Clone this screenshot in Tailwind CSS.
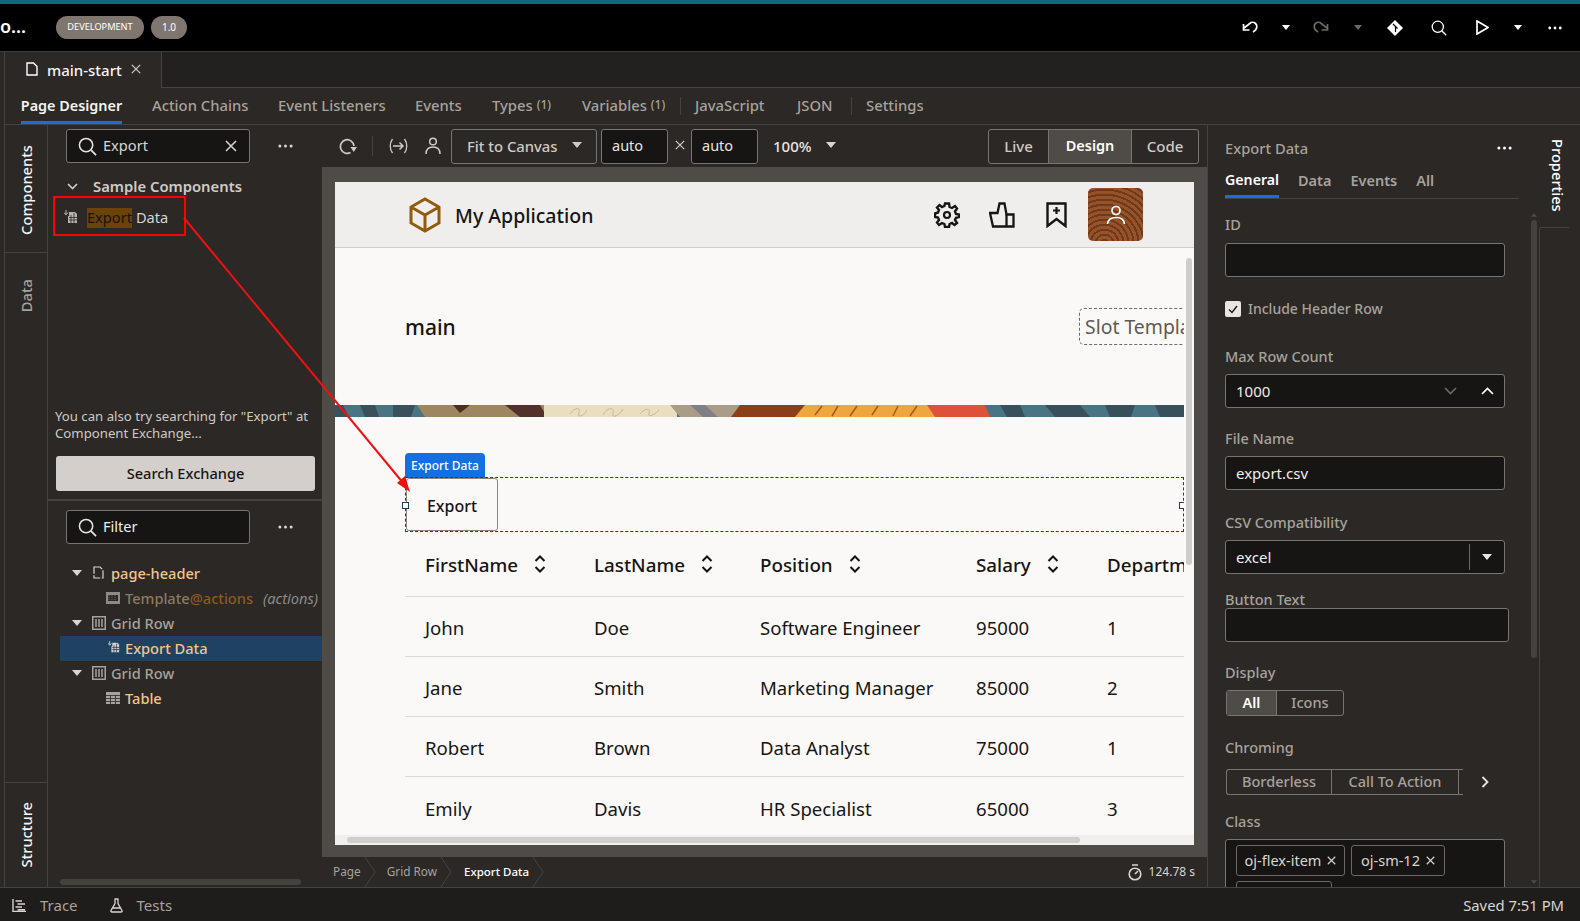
<!DOCTYPE html>
<html lang="en">
<head>
<meta charset="UTF-8" />
<title>Page Designer</title>
<script src="https://cdn.jsdelivr.net/npm/@tailwindcss/browser@4"></script>
</head>
<body class="w-[1580px] h-[921px] overflow-hidden relative flex flex-col bg-[#2b2826] text-[#a8a29c] font-['Noto_Sans',sans-serif] text-[15px] whitespace-nowrap">

<svg class="absolute w-0 h-0">
  <symbol id="caret" viewBox="0 0 10 6"><polygon points="0,0 10,0 5,6" fill="currentColor"/></symbol>
  <symbol id="dots" viewBox="0 0 16 4"><circle cx="2" cy="2" r="1.6" fill="currentColor"/><circle cx="8" cy="2" r="1.6" fill="currentColor"/><circle cx="14" cy="2" r="1.6" fill="currentColor"/></symbol>
  <symbol id="search" viewBox="0 0 20 20"><circle cx="8.5" cy="8.5" r="7" fill="none" stroke="currentColor" stroke-width="1.6"/><path d="M13.5 13.5L19 19" stroke="currentColor" stroke-width="1.8"/></symbol>
  <symbol id="close" viewBox="0 0 12 12"><path d="M1 1L11 11M11 1L1 11" stroke="currentColor" stroke-width="1.5"/></symbol>
  <symbol id="sort" viewBox="0 0 14 20"><path d="M2.5 7L7 2.5L11.5 7M2.5 13L7 17.5L11.5 13" fill="none" stroke="currentColor" stroke-width="2"/></symbol>
  <symbol id="grid" viewBox="0 0 14 14"><rect x="0.75" y="0.75" width="12.5" height="12.5" fill="none" stroke="currentColor" stroke-width="1.5"/><path d="M4 3v8M7 3v8M10 3v8" stroke="currentColor" stroke-width="1.5"/></symbol>
  <symbol id="export" viewBox="0 0 14 14"><path d="M5 2h6l2 2v9H4V6h1z" fill="currentColor"/><path d="M5 7.5h8M5 10h8M7 5v8M10 3v10" stroke="#2b2826" stroke-width="0.8"/><path d="M2 0v4M0 2.5L2 5L4 2.5" fill="none" stroke="currentColor" stroke-width="1"/></symbol>
</svg>

<div class="h-[4px] bg-[#0f6a7e] shrink-0"></div>

<!-- top bar -->
<header class="h-[48px] shrink-0 bg-black border-b border-[#3f3c38] flex items-center text-white">
  <span class="w-[51px] text-[18px] font-semibold pb-[2px]">o...</span>
  <span class="ml-[5px] h-[23px] w-[88px] rounded-full bg-[#7f776f] text-[9.2px] flex items-center justify-center mb-[1px]">DEVELOPMENT</span>
  <span class="ml-[7px] h-[23px] w-[36px] rounded-full bg-[#7f776f] text-[10px] flex items-center justify-center mb-[1px]">1.0</span>
  <div class="ml-auto flex items-center h-full">
    <svg class="w-[16px] h-[14px] mr-[24px]" viewBox="0 0 16 14"><path d="M2 7L9 1.5C12.5 0.5 15 3 14.8 6C14.6 8.5 13 10 11 11M1.5 3V9H7.5" fill="none" stroke="white" stroke-width="1.7"/></svg>
    <svg class="w-[8px] h-[5px] mr-[23px] text-white"><use href="#caret"/></svg>
    <svg class="w-[16px] h-[14px] mr-[25px]" viewBox="0 0 16 14"><path d="M14 7L7 1.5C3.5 0.5 1 3 1.2 6C1.4 8.5 3 10 5 11M14.5 3V9H8.5" fill="none" stroke="#6c6863" stroke-width="1.7"/></svg>
    <svg class="w-[8px] h-[5px] mr-[25px] text-[#6c6863]"><use href="#caret"/></svg>
    <svg class="w-[16px] h-[16px] mr-[28px]" viewBox="0 0 16 16"><path d="M8 0L16 8L8 16L0 8Z" fill="white"/><path d="M6 4L10.5 8.5M8.5 6.5V12" stroke="black" stroke-width="1.2"/></svg>
    <svg class="w-[16px] h-[16px] mr-[29px] text-white"><use href="#search"/></svg>
    <svg class="w-[13px] h-[15px] mr-[25px]" viewBox="0 0 13 15"><polygon points="1,1 12,7.5 1,14" fill="none" stroke="white" stroke-width="1.7"/></svg>
    <svg class="w-[8px] h-[5px] mr-[26px] text-white"><use href="#caret"/></svg>
    <svg class="w-[14px] h-[4px] mr-[18px] text-white"><use href="#dots"/></svg>
  </div>
</header>

<div class="flex-1 flex min-h-0">
  <div class="w-[4px] shrink-0 border-r border-[#46423e] box-content"></div>
  <div class="flex-1 flex flex-col min-w-0">

    <!-- file tabs -->
    <div class="h-[36px] shrink-0 bg-[#232120] border-b border-[#46423e] flex">
      <div class="w-[157px] -mb-[1px] bg-[#2b2826] border-r border-[#46423e] flex items-center pl-[21px] text-[#f5f4f2]">
        <svg class="w-[12px] h-[14px] mb-[3px]" viewBox="0 0 12 14"><path d="M1 1H7.5L11 4.5V13H1Z" fill="none" stroke="white" stroke-width="1.4"/></svg>
        <span class="ml-[9px] font-medium">main-start</span>
        <svg class="w-[10px] h-[10px] ml-[9px] mb-[2px] text-[#cfcac5]"><use href="#close"/></svg>
      </div>
    </div>

    <!-- designer tabs -->
    <nav class="h-[37px] shrink-0 border-b border-[#46423e] flex items-stretch font-medium text-[14.8px]">
      <span class="ml-[16px] w-[101px] flex items-center justify-center text-[#f5f4f2] font-semibold text-[14.4px] border-b-[3px] border-[#1a6fd6] pt-[2px]">Page Designer</span>
      <span class="ml-[30px] w-[96px] flex items-center pb-[2px]">Action Chains</span>
      <span class="ml-[30px] w-[107px] flex items-center pb-[2px]">Event Listeners</span>
      <span class="ml-[30px] w-[47px] flex items-center pb-[2px]">Events</span>
      <span class="ml-[30px] w-[60px] flex items-center pb-[2px]">Types<span class="ml-[4px] text-[12px]">(1)</span></span>
      <span class="ml-[30px] w-[83px] flex items-center pb-[2px]">Variables<span class="ml-[4px] text-[12px]">(1)</span></span>
      <span class="ml-[15px] w-[1px] h-[18px] self-center bg-[#46423e]"></span>
      <span class="ml-[14px] w-[72px] flex items-center pb-[2px]">JavaScript</span>
      <span class="ml-[30px] w-[39px] flex items-center pb-[2px]">JSON</span>
      <span class="ml-[15px] w-[1px] h-[18px] self-center bg-[#46423e]"></span>
      <span class="ml-[14px] w-[60px] flex items-center pb-[2px]">Settings</span>
    </nav>

    <div class="flex-1 flex min-h-0">
      <!-- left rail -->
      <aside class="w-[43px] shrink-0 border-r border-[#46423e] flex flex-col font-medium text-[14.7px]">
        <div class="h-[128px] border-b border-[#46423e] flex items-center justify-center text-[#f5f4f2] pt-[2px]"><span class="[writing-mode:vertical-rl] rotate-180">Components</span></div>
        <div class="flex-1 flex justify-center pt-[26px]"><span class="[writing-mode:vertical-rl] rotate-180 self-start">Data</span></div>
        <div class="h-[105px] border-t border-[#46423e] flex items-center justify-center text-[#f5f4f2]"><span class="[writing-mode:vertical-rl] rotate-180">Structure</span></div>
      </aside>

      <!-- left panel -->
      <section class="w-[274px] shrink-0 flex flex-col text-[14.6px]">
        <div class="h-[376px] shrink-0 flex flex-col border-b-2 border-[#46423e]">
          <div class="mt-[4px] ml-[18px] flex items-center">
            <div class="w-[184px] h-[34px] rounded-[3px] border border-[#7a746e] bg-[#161513] flex items-center pl-[11px] pr-[12px] text-[#d9d5d1]">
              <svg class="w-[19px] h-[19px] text-[#e8e5e2]"><use href="#search"/></svg>
              <span class="ml-[6px]">Export</span>
              <svg class="w-[12px] h-[12px] ml-auto"><use href="#close"/></svg>
            </div>
            <svg class="w-[15px] h-[4px] ml-[28px] text-[#d9d5d1]"><use href="#dots"/></svg>
          </div>
          <div class="mt-[13px] ml-[19px] h-[20px] flex items-center text-[#d0cbc6]">
            <svg class="w-[11px] h-[7px]" viewBox="0 0 11 7"><path d="M1 1L5.5 5.5L10 1" fill="none" stroke="currentColor" stroke-width="1.7"/></svg>
            <span class="ml-[15px] font-semibold text-[14.8px]">Sample Components</span>
          </div>
          <div class="mt-[11px] ml-[16px] h-[22px] flex items-center text-[#d9d5d1]">
            <svg class="w-[14px] h-[14px] mb-[3px] text-[#b8b3ae]"><use href="#export"/></svg>
            <span class="ml-[9px] bg-[#6b4207] text-[#1a1310] h-[20px] flex items-center">Export</span><span class="ml-[4px]">Data</span>
          </div>
          <p class="mt-[179px] ml-[7px] text-[13.2px] leading-[17px] text-[#cfcac5]">You can also try searching for "Export" at<br>Component Exchange...</p>
          <div class="mt-[14px] ml-[8px] w-[259px] h-[35px] rounded-[3px] bg-[#d4cfcb] text-[#161513] font-medium flex items-center justify-center">Search Exchange</div>
        </div>
        <div class="mt-[9px] ml-[18px] flex items-center">
          <div class="w-[184px] h-[34px] rounded-[3px] border border-[#7a746e] bg-[#161513] flex items-center pl-[11px] text-[#f0eeec]">
            <svg class="w-[19px] h-[19px] text-[#e8e5e2]"><use href="#search"/></svg>
            <span class="ml-[6px]">Filter</span>
          </div>
          <svg class="w-[15px] h-[4px] ml-[28px] text-[#d9d5d1]"><use href="#dots"/></svg>
        </div>
        <div class="mt-[17px] ml-[12px] flex flex-col font-medium">
          <div class="h-[25px] flex items-center pl-[12px] text-[#f2c48d]">
            <svg class="w-[10px] h-[6px] text-[#d9d5d1] mb-[2px]"><use href="#caret"/></svg>
            <svg class="w-[11px] h-[13px] ml-[11px] mb-[2px]" viewBox="0 0 11 13"><path d="M1 1H7L10 4V12H1Z" fill="none" stroke="#d9d5d1" stroke-width="1.2" stroke-dasharray="9 1.5"/></svg>
            <span class="ml-[7px]">page-header</span>
          </div>
          <div class="h-[25px] flex items-center pl-[46px] text-[#8d7a62]">
            <svg class="w-[14px] h-[12px] mb-[2px]" viewBox="0 0 14 12"><rect width="14" height="12" fill="#8f8a85"/><rect x="2" y="3" width="10" height="6" fill="#2b2826"/><path d="M3 3v6M6 3v6M9 3v6" stroke="#8f8a85" stroke-width="0.7" stroke-dasharray="1 1"/></svg>
            <span class="ml-[5px]">Template</span><span class="text-[#8f5b1c]">@actions</span><span class="ml-[10px] italic font-normal text-[#8f8a85]">(actions)</span>
          </div>
          <div class="h-[25px] flex items-center pl-[12px]">
            <svg class="w-[10px] h-[6px] text-[#d9d5d1] mb-[2px]"><use href="#caret"/></svg>
            <svg class="w-[14px] h-[14px] ml-[10px] mb-[1px] text-[#a8a29c]"><use href="#grid"/></svg>
            <span class="ml-[5px]">Grid Row</span>
          </div>
          <div class="h-[25px] flex items-center pl-[48px] text-[#f2c48d] bg-[#1f4263]">
            <svg class="w-[12px] h-[12px] mb-[3px] text-[#c9d2da]"><use href="#export"/></svg>
            <span class="ml-[5px]">Export Data</span>
          </div>
          <div class="h-[25px] flex items-center pl-[12px]">
            <svg class="w-[10px] h-[6px] text-[#d9d5d1] mb-[2px]"><use href="#caret"/></svg>
            <svg class="w-[14px] h-[14px] ml-[10px] mb-[1px] text-[#a8a29c]"><use href="#grid"/></svg>
            <span class="ml-[5px]">Grid Row</span>
          </div>
          <div class="h-[25px] flex items-center pl-[46px] text-[#f2c48d]">
            <svg class="w-[14px] h-[12px] mb-[2px]" viewBox="0 0 14 12"><rect width="14" height="12" fill="#a8a29c"/><path d="M0 3.5h14M0 6.5h14M0 9.5h14M4.5 3v9M9.5 3v9" stroke="#2b2826" stroke-width="0.8"/></svg>
            <span class="ml-[5px]">Table</span>
          </div>
        </div>
        <div class="mt-auto mb-[2px] ml-[12px] w-[241px] h-[6px] rounded-full bg-[#45423e]"></div>
      </section>

      <!-- centre -->
      <main class="w-[885px] shrink-0 flex flex-col min-h-0 bg-[#4f4b46]">
        <div class="h-[42px] shrink-0 bg-[#2b2826] flex items-center text-[#cfcac5]">
          <svg class="w-[18px] h-[17px] ml-[17px]" viewBox="0 0 18 17"><path d="M15 8A6.8 6.8 0 1 0 11.5 14.5" fill="none" stroke="currentColor" stroke-width="1.7"/><polygon points="11.5,9 18,9 14.7,14" fill="currentColor"/></svg>
          <span class="ml-[15px] w-[1px] h-[20px] bg-[#46423e]"></span>
          <svg class="w-[19px] h-[16px] ml-[16px]" viewBox="0 0 19 16"><path d="M3.5 1C0.5 5 0.5 11 3.5 15M15.5 1C18.5 5 18.5 11 15.5 15" fill="none" stroke="currentColor" stroke-width="1.3"/><path d="M4 8H14M10.5 4.5L14 8L10.5 11.5" fill="none" stroke="currentColor" stroke-width="1.5"/></svg>
          <svg class="w-[16px] h-[18px] ml-[17px]" viewBox="0 0 16 18"><circle cx="8" cy="4.5" r="3.3" fill="none" stroke="currentColor" stroke-width="1.5"/><path d="M1 17C1 12 4 10 8 10S15 12 15 17" fill="none" stroke="currentColor" stroke-width="1.5"/></svg>
          <div class="ml-[10px] w-[146px] h-[35px] rounded-[3px] border border-[#7a746e] flex items-center pl-[15px] font-medium text-[14.8px]">Fit to Canvas<svg class="w-[10px] h-[6px] ml-[15px] mb-[2px]"><use href="#caret"/></svg></div>
          <div class="ml-[4px] w-[67px] h-[35px] rounded-[3px] border border-[#7a746e] bg-[#161513] flex items-center pl-[10px] text-[#e8e5e2] text-[14.5px]">auto</div>
          <svg class="w-[10px] h-[10px] ml-[7px] mr-[6px] mb-[2px] text-[#cfcac5]"><use href="#close"/></svg>
          <div class="w-[67px] h-[35px] rounded-[3px] border border-[#7a746e] bg-[#161513] flex items-center pl-[10px] text-[#e8e5e2] text-[14.5px]">auto</div>
          <span class="ml-[15px] font-medium text-[#e8e5e2]">100%</span>
          <svg class="w-[10px] h-[6px] ml-[14px] mb-[2px] text-[#d9d5d1]"><use href="#caret"/></svg>
          <div class="ml-auto mr-[8px] h-[35px] flex rounded-[3px] border border-[#7a746e] font-medium">
            <span class="w-[59px] flex items-center justify-center">Live</span>
            <span class="w-[84px] flex items-center justify-center bg-[#4f4b46] text-white font-semibold text-[14.5px] border-x border-[#7a746e]">Design</span>
            <span class="w-[66px] flex items-center justify-center">Code</span>
          </div>
        </div>

        <div class="flex-1 min-h-0 px-[13px] pt-[15px] pb-[12px] flex">
          <div class="flex-1 min-w-0 flex flex-col bg-[#faf9f8] text-[#161513]">
            <div class="h-[66px] shrink-0 bg-[#efeeec] border-b border-[#d0cecb] flex items-center">
              <svg class="w-[32px] h-[36px] ml-[74px]" viewBox="0 0 32 36"><path d="M16 2L30 10V26L16 34L2 26V10ZM2 10L16 18L30 10M16 18V34" fill="none" stroke="#935a0e" stroke-width="3"/></svg>
              <span class="ml-[14px] text-[19.5px] font-medium pt-[3px]">My Application</span>
              <svg class="w-[26px] h-[26px] ml-auto" viewBox="0 0 26 26"><circle cx="13" cy="13" r="3" fill="none" stroke="#161513" stroke-width="2.2"/><path d="M11 1.5H15L15.6 5L18 6L21 4L23 6.5L21 9.5L22 12L25 12.5V15L22 15.8L21 18L23 21L20.5 23L18 21L15.6 22L15 25H11L10.4 22L8 21L5 23L3 20.5L5 18L4 15.6L1 15V11.5L4 10.5L5 8L3 5.5L5.5 3L8 5L10.4 4Z" fill="none" stroke="#161513" stroke-width="2.4"/></svg>
              <svg class="w-[26px] h-[26px] ml-[29px]" viewBox="0 0 26 26"><path d="M1 11H8.5L10.5 1.5H15.5L17.5 12.5H24.5V24.5H4Z" fill="none" stroke="#161513" stroke-width="2.3"/><path d="M17.5 12.5V24.5" stroke="#161513" stroke-width="2.3"/></svg>
              <svg class="w-[21px] h-[26px] ml-[31px]" viewBox="0 0 21 26"><path d="M1.5 1.5H19.5V24L10.5 17L1.5 24Z" fill="none" stroke="#161513" stroke-width="2.4"/><path d="M10.5 5V12M7 8.5H14" stroke="#161513" stroke-width="2.2"/></svg>
              <div class="ml-[21px] mr-[51px] w-[55px] h-[53px] rounded-[5px] flex items-center justify-center bg-[repeating-radial-gradient(circle_at_30%_105%,#96522a_0px,#96522a_3px,#6f3a18_3px,#6f3a18_5px)]">
                <svg class="w-[20px] h-[20px]" viewBox="0 0 20 20"><circle cx="10" cy="5.5" r="4" fill="none" stroke="white" stroke-width="1.7"/><path d="M1.5 19C2 14 5 12.5 10 12.5S18 14 18.5 19" fill="none" stroke="white" stroke-width="1.7"/></svg>
              </div>
            </div>

            <div class="flex-1 min-h-0 flex">
              <div class="w-[849px] shrink-0 overflow-hidden flex flex-col *:shrink-0">
                <div class="h-[157px] flex items-center pl-[70px]">
                  <span class="w-[674px] shrink-0 text-[21px] font-medium pt-[2px]">main</span>
                  <span class="h-[37px] shrink-0 rounded-l-[5px] border border-dashed border-[#6e6a65] pl-[5px] pr-[20px] text-[19.4px] text-[#5f5a55] flex items-center">Slot Template</span>
                </div>
                <svg class="w-[849px] h-[12px]" viewBox="0 0 849 12" preserveAspectRatio="none">
                  <rect width="849" height="12" fill="#4a7484"/>
                  <path d="M25 0H40L44 12H30ZM58 0H80L76 12H58ZM0 0H8L14 12H0Z" fill="#3a505b"/>
                  <polygon points="82,0 210,0 214,12 90,12" fill="#9d8660"/>
                  <polygon points="118,0 135,0 125,8" fill="#4a2e1e"/>
                  <polygon points="170,0 205,0 212,12 185,12" fill="#54302a"/>
                  <rect x="209" y="0" width="133" height="12" fill="#e9dec0"/>
                  <path d="M235 9C240 2 246 2 244 8S250 10 252 5M268 10C272 2 280 2 278 8S284 11 288 4M305 9C310 3 316 3 314 8S320 10 324 5" fill="none" stroke="#c9b88f" stroke-width="1"/>
                  <polygon points="335,0 405,0 400,12 345,12" fill="#a99d87"/>
                  <polygon points="355,0 370,0 383,12 368,12" fill="#7f7f86"/>
                  <polygon points="405,0 470,0 460,12 396,12" fill="#8a3f1a"/>
                  <polygon points="470,0 600,0 606,12 460,12" fill="#efa63e"/>
                  <path d="M480 10L487 1M497 11L503 1M515 11L522 1M537 10L543 1M558 11L563 1M575 11L582 1" stroke="#a25c22" stroke-width="1.5"/>
                  <polygon points="592,0 650,0 655,12 600,12" fill="#dd5239"/>
                  <polygon points="655,0 849,0 849,12 660,12" fill="#4a7484"/>
                  <path d="M665 0H685L690 12H672ZM710 0H745L755 12H720ZM770 0H800L796 12H775ZM820 0H849V12H825Z" fill="#37505c"/>
                </svg>
                <div class="mt-[36px] ml-[70px] w-[80px] h-[25px] rounded-t-[4px] bg-[#1270e0] text-white text-[12px] font-medium flex items-center justify-center pt-[1px]">Export Data</div>
                <div class="relative -mt-[1px] ml-[70px] h-[55px] w-[779px] border border-dashed border-[#1f3f66]">
                  <div class="w-[92px] h-full rounded-[3px] border border-[#8a8580] flex items-center justify-center text-[16px] font-medium pt-[2px]">Export</div>
                  <span class="absolute -left-[4px] top-[24px] w-[7px] h-[7px] bg-white border border-[#1f3f66]"></span>
                  <span class="absolute -right-[3px] top-[24px] w-[7px] h-[7px] bg-white border border-[#1f3f66]"></span>
                </div>
                <div class="ml-[70px] w-[830px] flex flex-col text-[18.6px]">
                  <div class="h-[65px] flex items-center border-b border-[#dcdad7] font-medium text-[18.8px] pt-[2px]">
                    <span class="w-[169px] pl-[20px] flex items-center">FirstName<svg class="w-[14px] h-[20px] ml-[15px] mb-[2px]"><use href="#sort"/></svg></span>
                    <span class="w-[166px] pl-[20px] flex items-center">LastName<svg class="w-[14px] h-[20px] ml-[15px] mb-[2px]"><use href="#sort"/></svg></span>
                    <span class="w-[216px] pl-[20px] flex items-center">Position<svg class="w-[14px] h-[20px] ml-[15px] mb-[2px]"><use href="#sort"/></svg></span>
                    <span class="w-[131px] pl-[20px] flex items-center">Salary<svg class="w-[14px] h-[20px] ml-[15px] mb-[2px]"><use href="#sort"/></svg></span>
                    <span class="pl-[20px]">Department</span>
                  </div>
                  <div class="h-[60px] flex items-center border-b border-[#dcdad7] pt-[3px]">
                    <span class="w-[169px] pl-[20px]">John</span><span class="w-[166px] pl-[20px]">Doe</span><span class="w-[216px] pl-[20px]">Software Engineer</span><span class="w-[131px] pl-[20px]">95000</span><span class="pl-[20px]">1</span>
                  </div>
                  <div class="h-[60px] flex items-center border-b border-[#dcdad7] pt-[3px]">
                    <span class="w-[169px] pl-[20px]">Jane</span><span class="w-[166px] pl-[20px]">Smith</span><span class="w-[216px] pl-[20px]">Marketing Manager</span><span class="w-[131px] pl-[20px]">85000</span><span class="pl-[20px]">2</span>
                  </div>
                  <div class="h-[60px] flex items-center border-b border-[#dcdad7] pt-[3px]">
                    <span class="w-[169px] pl-[20px]">Robert</span><span class="w-[166px] pl-[20px]">Brown</span><span class="w-[216px] pl-[20px]">Data Analyst</span><span class="w-[131px] pl-[20px]">75000</span><span class="pl-[20px]">1</span>
                  </div>
                  <div class="h-[60px] flex items-center pt-[3px]">
                    <span class="w-[169px] pl-[20px]">Emily</span><span class="w-[166px] pl-[20px]">Davis</span><span class="w-[216px] pl-[20px]">HR Specialist</span><span class="w-[131px] pl-[20px]">65000</span><span class="pl-[20px]">3</span>
                  </div>
                </div>
              </div>
              <div class="flex-1 flex justify-center pt-[10px] pb-[270px]"><div class="w-[6px] rounded-full bg-[#d0cecb]"></div></div>
            </div>
            <div class="h-[10px] shrink-0 bg-[#f0efed] flex items-center pl-[12px]"><div class="w-[733px] h-[6px] rounded-full bg-[#d0cecb]"></div></div>
          </div>
        </div>

        <div class="h-[30px] shrink-0 bg-[#2b2826] flex items-center text-[11.8px]">
          <span class="ml-[11px]">Page</span>
          <svg class="w-[12px] h-[30px] ml-[3px]" viewBox="0 0 12 30"><path d="M1 0L11 15L1 30" fill="none" stroke="#46423e"/></svg>
          <span class="ml-[11px]">Grid Row</span>
          <svg class="w-[12px] h-[30px] ml-[3px]" viewBox="0 0 12 30"><path d="M1 0L11 15L1 30" fill="none" stroke="#46423e"/></svg>
          <span class="ml-[12px] text-white font-medium text-[11.5px]">Export Data</span>
          <svg class="w-[12px] h-[30px] ml-[3px]" viewBox="0 0 12 30"><path d="M1 0L11 15L1 30" fill="none" stroke="#46423e"/></svg>
          <svg class="w-[14px] h-[17px] ml-auto" viewBox="0 0 14 17"><circle cx="7" cy="10" r="5.8" fill="none" stroke="#d9d5d1" stroke-width="1.6"/><path d="M4 1H10M7 10L10 7" stroke="#d9d5d1" stroke-width="1.6"/></svg>
          <span class="ml-[7px] mr-[12px] text-[#d9d5d1] text-[12px]">124.78 s</span>
        </div>
      </main>

      <!-- properties -->
      <section class="w-[331px] shrink-0 pl-[17px] flex border-l border-[#46423e] relative text-[14.5px] font-medium">
        <div class="w-[294px] shrink-0 flex flex-col overflow-hidden *:shrink-0">
          <div class="mt-[13px] h-[20px] flex items-center"><span class="text-[14.7px]">Export Data</span><svg class="w-[15px] h-[4px] ml-auto mr-[7px] text-white"><use href="#dots"/></svg></div>
          <div class="mt-[13px] h-[28px] flex border-b border-[#46423e] font-semibold leading-[18px]">
            <span class="w-[54px] text-white text-[14.2px] border-b-[3px] border-[#1a6fd6]">General</span>
            <span class="ml-[19px]">Data</span>
            <span class="ml-[19px]">Events</span>
            <span class="ml-[19px]">All</span>
          </div>
          <div class="mt-[16px] h-[20px] leading-[18px]">ID</div>
          <div class="mt-[8px] w-[280px] h-[34px] rounded-[3px] border border-[#7a746e] bg-[#161513]"></div>
          <div class="mt-[23px] h-[18px] flex items-center">
            <span class="w-[16px] h-[16px] rounded-[2px] bg-[#e8e5e2] flex items-center justify-center"><svg class="w-[10px] h-[9px]" viewBox="0 0 10 9"><path d="M1 4.5L4 7.5L9 1" fill="none" stroke="#161513" stroke-width="1.3"/></svg></span>
            <span class="ml-[7px] text-[14px] pb-[2px]">Include Header Row</span>
          </div>
          <div class="mt-[29px] h-[20px] leading-[18px]">Max Row Count</div>
          <div class="mt-[7px] w-[280px] h-[34px] rounded-[3px] border border-[#7a746e] bg-[#161513] flex items-center pl-[10px] text-[#f0eeec] text-[15px] font-normal">1000
            <svg class="w-[13px] h-[8px] ml-auto" viewBox="0 0 13 8"><path d="M1 1L6.5 6.5L12 1" fill="none" stroke="#6c6863" stroke-width="1.7"/></svg>
            <svg class="w-[13px] h-[8px] ml-[24px] mr-[10px]" viewBox="0 0 13 8"><path d="M1 7L6.5 1.5L12 7" fill="none" stroke="white" stroke-width="1.7"/></svg>
          </div>
          <div class="mt-[21px] h-[20px] leading-[18px]">File Name</div>
          <div class="mt-[7px] w-[280px] h-[34px] rounded-[3px] border border-[#7a746e] bg-[#161513] flex items-center pl-[10px] text-[#f0eeec] text-[15px] font-normal">export.csv</div>
          <div class="mt-[22px] h-[20px] leading-[20px]">CSV Compatibility</div>
          <div class="mt-[8px] w-[280px] h-[34px] rounded-[3px] border border-[#7a746e] bg-[#161513] flex items-center pl-[10px] text-[#f0eeec] text-[15px] font-normal">excel
            <span class="ml-auto w-[1px] h-[26px] bg-[#6c6863]"></span>
            <svg class="w-[10px] h-[6px] mx-[12px] text-[#e8e5e2]"><use href="#caret"/></svg>
          </div>
          <div class="mt-[15px] h-[20px] leading-[20px]">Button Text</div>
          <div class="-mt-[1px] w-[284px] h-[34px] rounded-[3px] border border-[#7a746e] bg-[#161513]"></div>
          <div class="mt-[21px] h-[20px] leading-[18px]">Display</div>
          <div class="mt-[7px] ml-[1px] w-[118px] h-[26px] flex rounded-[3px] border border-[#7a746e]">
            <span class="w-[50px] flex items-center justify-center bg-[#4f4b46] text-white font-semibold border-r border-[#7a746e]">All</span>
            <span class="flex-1 flex items-center justify-center">Icons</span>
          </div>
          <div class="mt-[22px] h-[20px] leading-[18px]">Chroming</div>
          <div class="mt-[11px] flex items-center">
            <div class="ml-[1px] w-[237px] h-[26px] flex rounded-l-[3px] border border-r-0 border-[#7a746e]">
              <span class="w-[105px] flex items-center justify-center border-r border-[#7a746e]">Borderless</span>
              <span class="w-[127px] flex items-center justify-center border-r border-[#7a746e]">Call To Action</span>
            </div>
            <svg class="w-[8px] h-[12px] ml-[18px]" viewBox="0 0 8 12"><path d="M1.5 1L6.5 6L1.5 11" fill="none" stroke="#e8e5e2" stroke-width="1.8"/></svg>
          </div>
          <div class="mt-[17px] h-[20px] leading-[18px]">Class</div>
          <div class="mt-[7px] w-[280px] h-[80px] rounded-t-[3px] border border-[#7a746e] bg-[#161513] pl-[10px] pt-[5px] flex flex-wrap gap-x-[6px] gap-y-[5px] content-start font-normal text-[#d9d5d1]">
            <span class="w-[109px] h-[31px] rounded-[3px] border border-[#6c6863] flex items-center justify-center">oj-flex-item<svg class="w-[9px] h-[9px] ml-[6px]"><use href="#close"/></svg></span>
            <span class="w-[94px] h-[31px] rounded-[3px] border border-[#6c6863] flex items-center justify-center">oj-sm-12<svg class="w-[9px] h-[9px] ml-[6px]"><use href="#close"/></svg></span>
            <span class="w-[96px] h-[31px] rounded-[3px] border border-[#6c6863]"></span>
          </div>
        </div>
        <div class="w-[8px] shrink-0 relative flex flex-col items-center ml-[11px]">
          <svg class="w-[6px] h-[4px] mt-[88px] text-[#4f4b46] rotate-180"><use href="#caret"/></svg>
          <div class="mt-[3px] w-[6px] h-[438px] rounded-full bg-[#45423e]"></div>
          <svg class="w-[6px] h-[4px] mt-auto mb-[3px] text-[#4f4b46]"><use href="#caret"/></svg>
        </div>
        <div class="ml-[1px] flex-1 flex flex-col font-medium text-[14.7px] text-white">
          <div class="h-[102px] flex pt-[14px] pl-[8px]"><span class="[writing-mode:vertical-rl] self-start">Properties</span></div>
          <div class="flex-1 border-l border-t border-[#46423e] rounded-tl-[2px]"></div>
        </div>
      </section>
    </div>
  </div>
</div>

<!-- status bar -->
<footer class="h-[34px] shrink-0 bg-[#1e1d1b] border-t border-[#46423e] flex items-center text-[#a8a29c] pt-[1px]">
  <svg class="w-[14px] h-[13px] ml-[12px]" viewBox="0 0 14 13"><path d="M1 0V12.5H14M3.5 2H10M5.5 5H13M3.5 8H10M5.5 10.8H13" fill="none" stroke="#d9d5d1" stroke-width="1.4"/></svg>
  <span class="ml-[14px]">Trace</span>
  <svg class="w-[13px] h-[15px] ml-[32px]" viewBox="0 0 13 15"><path d="M4.5 1H8.5M5 1V5.5L1 12.5C0.6 13.5 1 14 2 14H11C12 14 12.4 13.5 12 12.5L8 5.5V1M3 10H10" fill="none" stroke="#d9d5d1" stroke-width="1.3"/></svg>
  <span class="ml-[14px]">Tests</span>
  <span class="ml-auto mr-[16px] text-[#d9d5d1] text-[14.8px]">Saved 7:51 PM</span>
</footer>

<!-- annotation drawn over the page -->
<div class="absolute left-[53px] top-[196px] w-[133px] h-[40px] border-2 border-[#ff0000]"></div>
<svg class="absolute left-0 top-0 w-[1580px] h-[921px] pointer-events-none" viewBox="0 0 1580 921">
  <path d="M184 218L404 484" stroke="#ee1111" stroke-width="2"/>
  <polygon points="410,492 397,483 405,476" fill="#ee1111"/>
</svg>
</body>
</html>
